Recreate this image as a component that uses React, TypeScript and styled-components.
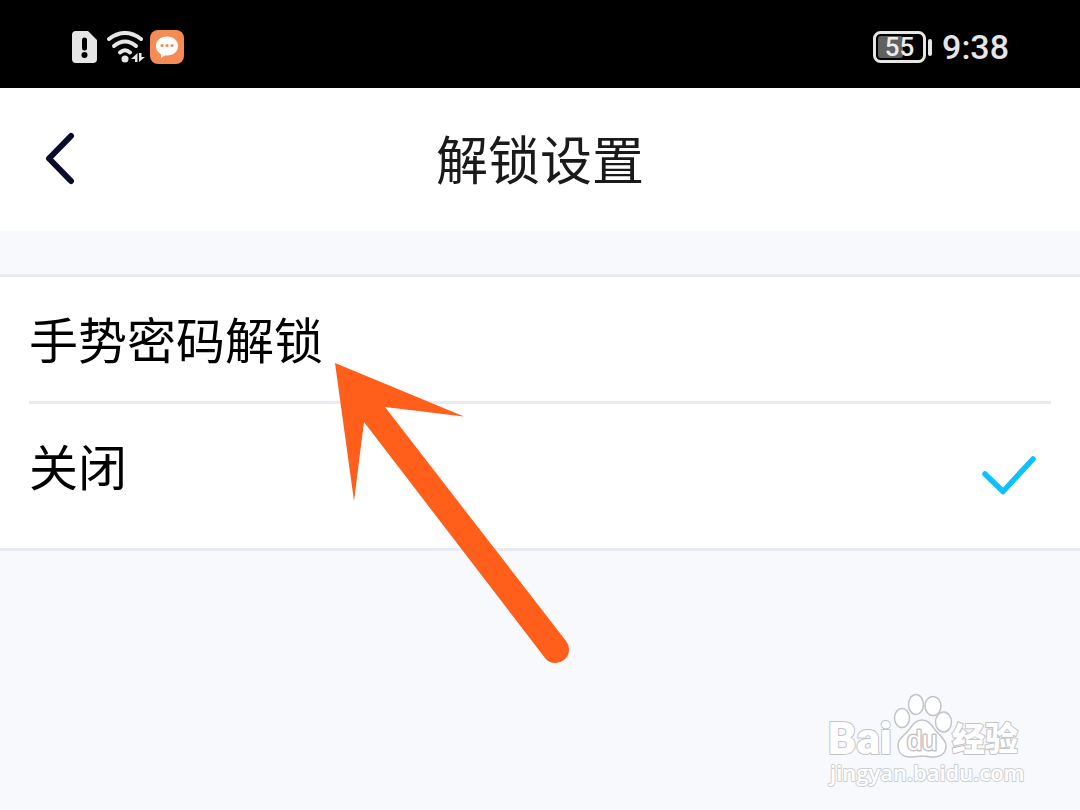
import React, { useState } from "react";
import styled, { createGlobalStyle } from "styled-components";

const GlobalStyle = createGlobalStyle`
  *, *::before, *::after { box-sizing: border-box; }
  body {
    margin: 0;
    background: #f7f9fd;
    font-family: "Noto Sans CJK SC", "Noto Sans", sans-serif;
  }
`;

const Page = styled.div`
  position: relative;
  min-height: 100vh;
  background: #f7f9fd;
  overflow: hidden;
`;

const StatusBar = styled.div`
  display: flex;
  align-items: center;
  justify-content: space-between;
  height: 88px;
  padding: 6px 71px 0 72px;
  background: #000;
  color: #e6e6e6;
`;

const StatusGroup = styled.div<{ $gap: number }>`
  display: flex;
  align-items: center;
  gap: ${(p) => p.$gap}px;
  svg {
    display: block;
  }
`;

const BatteryText = styled.text`
  font: 500 26px Roboto, sans-serif;
  fill: #ececec;
`;

const Clock = styled.time`
  font: 500 34px/40px Roboto, sans-serif;
`;

const Header = styled.header`
  display: grid;
  grid-template-columns: 120px 1fr 120px;
  align-items: center;
  height: 143px;
  background: #fff;
`;

const BackButton = styled.button`
  display: flex;
  align-items: center;
  height: 100%;
  padding: 0 0 2px 44px;
  border: 0;
  background: none;
  cursor: pointer;
`;

const Title = styled.h1`
  margin: 0;
  padding-bottom: 4px;
  font-size: 52px;
  line-height: 60px;
  font-weight: 400;
  text-align: center;
  color: #1a1a1a;
`;

const OptionList = styled.fieldset`
  min-width: 0;
  margin: 43px 0 0;
  padding: 0;
  border: 0 solid #e8ebf2;
  border-width: 3px 0;
  background: #fff;
`;

const Divider = styled.hr`
  height: 3px;
  margin: 0 29px;
  border: 0;
  background: #e8ebf2;
`;

const Option = styled.label<{ $height: number }>`
  display: flex;
  align-items: center;
  justify-content: space-between;
  position: relative;
  min-height: ${(p) => p.$height}px;
  padding: 0 43px 0 29px;
  cursor: pointer;
`;

const OptionText = styled.span`
  align-self: flex-start;
  padding-top: 31px;
  font-size: 49px;
  line-height: 60px;
  color: #000;
`;

const OptionInput = styled.input`
  position: absolute;
  inset: 0;
  margin: 0;
  opacity: 0;
  cursor: pointer;
`;

const Pointer = styled.svg`
  position: absolute;
  left: 335px;
  top: 363px;
  pointer-events: none;
`;

const Watermark = styled.svg`
  position: absolute;
  right: 48px;
  bottom: 16px;
  pointer-events: none;
`;

const MarkText = styled.text`
  font: 700 44px "Liberation Sans", "Noto Sans CJK SC", sans-serif;
  fill: #fff;
  stroke: #c3c4c7;
  stroke-width: 2px;
  stroke-linejoin: round;
  paint-order: stroke;
`;

const MarkBai = styled(MarkText)`
  font-family: Roboto, sans-serif;
  font-weight: 900;
`;

const MarkDu = styled(MarkText)`
  font-size: 27px;
  font-weight: 400;
  stroke-width: 3px;
`;

const MarkName = styled(MarkText)`
  font-size: 33px;
  font-weight: 900;
`;

const MarkUrl = styled(MarkText)`
  font-family: "Open Sans", sans-serif;
  font-size: 22px;
  font-weight: 600;
  stroke: #cfd0d3;
`;

const SimIcon = () => (
  <svg width="30" height="32" viewBox="0 0 30 32" aria-hidden="true">
    <path d="M4 0H16L25 9V28a4 4 0 0 1-4 4H4a4 4 0 0 1-4-4V4a4 4 0 0 1 4-4Z" fill="#e6e6e6" />
    <path d="M12.500 9v8" stroke="#000" strokeWidth="5" strokeLinecap="round" />
    <circle cx="12.500" cy="24" r="3" fill="#000" />
  </svg>
);

const WifiIcon = () => (
  <svg width="38" height="32" viewBox="0 0 38 32" fill="none" aria-hidden="true">
    <g stroke="#e6e6e6" strokeWidth="4" strokeLinecap="round">
      <path d="M2 8Q18-4 34 8" />
      <path d="M7 15Q18 6 29 15" />
      <path d="M13 21.500Q18 17 23 21.500" />
    </g>
    <circle cx="18" cy="28" r="3.500" fill="#e6e6e6" />
    <path d="M30.500 22v9h-2.500v-3h-4zM32 31v-9h2.500v4h3.500z" fill="#e6e6e6" />
  </svg>
);

const MessageIcon = () => (
  <svg width="34" height="34" viewBox="0 0 34 34" aria-hidden="true">
    <rect width="34" height="34" rx="8" fill="#f58c55" />
    <path
      d="M17 6.500c6.500 0 11 4 11 9.500s-4.500 9.500-11 9.500h-2l-4 2.500v-3.500C8 22.500 6 19.800 6 16c0-5.500 4.500-9.500 11-9.500Z"
      fill="#fff"
    />
    <g fill="#f58c55">
      <circle cx="12" cy="15.500" r="1.600" />
      <circle cx="17" cy="15.500" r="1.600" />
      <circle cx="22" cy="15.500" r="1.600" />
    </g>
  </svg>
);

const BatteryIcon = () => (
  <svg width="60" height="32" viewBox="0 0 60 32" role="img" aria-label="55%">
    <rect x="1.500" y="1.500" width="50" height="29" rx="6" fill="none" stroke="#e6e6e6" strokeWidth="3" />
    <rect x="5" y="5" width="25" height="22" rx="3" fill="#606060" />
    <BatteryText x="26.500" y="25" textAnchor="middle">
      55
    </BatteryText>
    <rect x="55" y="8" width="4" height="17" rx="2" fill="#e6e6e6" />
  </svg>
);

const CheckIcon = () => (
  <svg width="56" height="40" viewBox="0 0 56 40" fill="none" aria-hidden="true">
    <path d="M4 18 22 35.500 52 3" stroke="#0bc1ff" strokeWidth="5.500" strokeLinecap="round" strokeLinejoin="round" />
  </svg>
);

const options = [
  { id: "gesture", label: "手势密码解锁", height: 124 },
  { id: "off", label: "关闭", height: 144 },
];

export default function App() {
  const [selected, setSelected] = useState("off");

  return (
    <Page>
      <GlobalStyle />
      <StatusBar>
        <StatusGroup $gap={5}>
          <SimIcon />
          <WifiIcon />
          <MessageIcon />
        </StatusGroup>
        <StatusGroup $gap={9}>
          <BatteryIcon />
          <Clock>9:38</Clock>
        </StatusGroup>
      </StatusBar>

      <Header>
        <BackButton type="button" aria-label="返回">
          <svg width="32" height="54" viewBox="0 0 32 54" fill="none" aria-hidden="true">
            <path d="M27 4 5 26.500 27 49" stroke="#080c28" strokeWidth="6" strokeLinecap="round" strokeLinejoin="round" />
          </svg>
        </BackButton>
        <Title>解锁设置</Title>
      </Header>

      <OptionList aria-label="解锁设置">
        {options.map((option, index) => (
          <React.Fragment key={option.id}>
            {index > 0 && <Divider />}
            <Option $height={option.height}>
              <OptionInput
                type="radio"
                name="unlock"
                checked={selected === option.id}
                onChange={() => setSelected(option.id)}
              />
              <OptionText>{option.label}</OptionText>
              {selected === option.id && <CheckIcon />}
            </Option>
          </React.Fragment>
        ))}
      </OptionList>

      <Pointer width="236" height="302" viewBox="0 0 236 302" aria-hidden="true">
        <path d="M0 0 129 53.500 50 44 231 278A13.500 13.500 0 0 1 210 295L29 59 19 138Z" fill="#ff5f1a" />
      </Pointer>

      <Watermark width="206" height="102" viewBox="0 0 206 102">
        <MarkBai x="2" y="62">
          Bai
        </MarkBai>
        <g fill="#fff" stroke="#c3c4c7" strokeWidth="1.500">
          <ellipse cx="76" cy="26" rx="7.500" ry="9.500" />
          <ellipse cx="90" cy="12.500" rx="7.500" ry="10" />
          <ellipse cx="107" cy="14" rx="8" ry="9.500" />
          <ellipse cx="117.500" cy="30" rx="8" ry="10" />
          <path d="M96 28c7 0 10 6 14 11s10 8 10 15c0 8-6 11-12 11-5 0-8-1-12-1s-7 1-12 1c-7 0-12-4-12-12 0-7 6-9 10-14s7-11 14-11Z" />
        </g>
        <MarkDu x="96" y="58" textAnchor="middle">
          du
        </MarkDu>
        <MarkName x="126" y="59">
          经验
        </MarkName>
        <MarkUrl x="4" y="89">
          jingyan.baidu.com
        </MarkUrl>
      </Watermark>
    </Page>
  );
}
